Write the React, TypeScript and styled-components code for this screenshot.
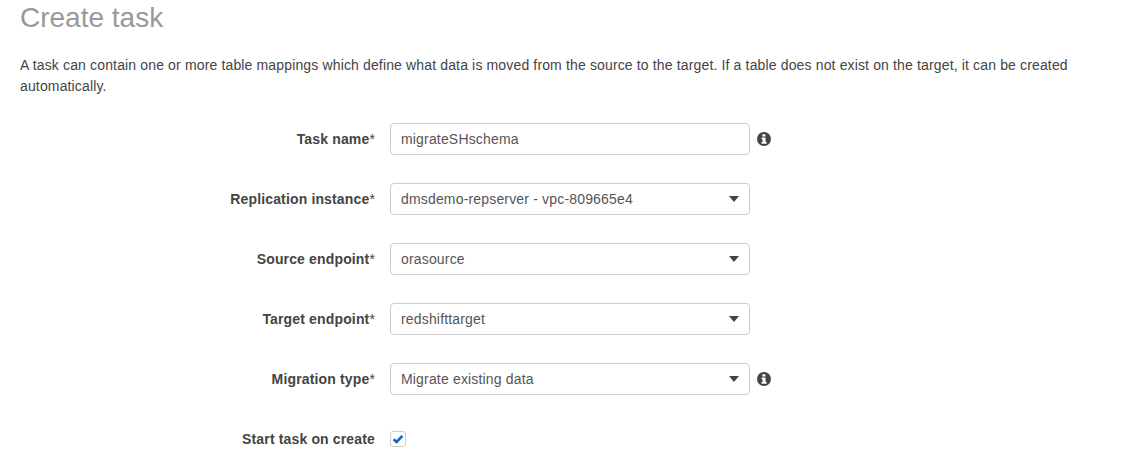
import { FC } from 'react';
import styled, { createGlobalStyle } from 'styled-components';

const GlobalStyle = createGlobalStyle`
    html, body {
        margin: 0;
        padding: 0;
        background: #fff;
    }
    body {
        font-family: "Liberation Sans", Arial, sans-serif;
        color: #444;
        overflow: hidden;
    }
`;

const Page = styled.div`
    width: 1132px;
    height: 464px;
    padding: 0 20px;
    box-sizing: border-box;
    overflow: hidden;
`;

const Title = styled.h1`
    margin: 0;
    height: 38px;
    font-size: 28px;
    line-height: 36px;
    font-weight: 400;
    color: #999;
`;

const Description = styled.p`
    margin: 17px 0 0;
    width: 1070px;
    font-size: 14px;
    line-height: 21px;
    letter-spacing: 0.146px;
    color: #444;
`;

const Form = styled.div`
    display: flex;
    flex-direction: column;
    margin-top: 26px;
    gap: 28px;
`;

const Row = styled.div`
    display: flex;
    align-items: center;
    height: 32px;
`;

const Label = styled.label`
    width: 370px;
    padding-right: 15px;
    box-sizing: border-box;
    text-align: right;
    font-size: 14px;
    font-weight: 700;
    letter-spacing: 0.15px;
    color: #444;
    white-space: nowrap;
`;

const Star = styled.span`
    font-weight: 400;
`;

const Field = styled.div`
    position: relative;
    display: flex;
    align-items: center;
    width: 360px;
    height: 32px;
    padding: 0 10px;
    box-sizing: border-box;
    border: 1px solid #ccc;
    border-radius: 4px;
    font-size: 14px;
    letter-spacing: 0.17px;
    color: #555;
    background: #fff;
`;

const Caret = styled.span`
    position: absolute;
    right: 10px;
    top: 12px;
    width: 0;
    height: 0;
    border-left: 5px solid transparent;
    border-right: 5px solid transparent;
    border-top: 6px solid #444;
`;

const InfoIcon = styled.svg`
    width: 14px;
    height: 14px;
    margin-left: 7px;
    fill: #444;
`;

const CheckBox = styled.div`
    display: flex;
    align-items: center;
    justify-content: center;
    width: 16px;
    height: 16px;
    box-sizing: border-box;
    border: 1px solid #ccc;
    border-radius: 3px;
    background: #fff;
`;

const Info: FC = () => (
    <InfoIcon viewBox="0 0 14 14">
        <path d="M7 0a7 7 0 1 0 0 14A7 7 0 0 0 7 0zM5.4 2.2h3v2.4h-3zM9.6 11.8H4.6V10h1V7.4h-1V5.6h4V10h1z" fillRule="evenodd" />
    </InfoIcon>
);

const fields = [
    { name: 'Task name', value: 'migrateSHschema', select: false, info: true },
    { name: 'Replication instance', value: 'dmsdemo-repserver - vpc-809665e4', select: true, info: false },
    { name: 'Source endpoint', value: 'orasource', select: true, info: false },
    { name: 'Target endpoint', value: 'redshifttarget', select: true, info: false },
    { name: 'Migration type', value: 'Migrate existing data', select: true, info: true },
];

const App: FC = () => (
    <Page>
        <GlobalStyle />
        <Title>Create task</Title>
        <Description>
            A task can contain one or more table mappings which define what data is moved from the source to the target. If a table does not exist on the target, it can be created automatically.
        </Description>
        <Form>
            {fields.map((f) => (
                <Row key={f.name}>
                    <Label>
                        {f.name}
                        <Star>*</Star>
                    </Label>
                    <Field>
                        {f.value}
                        {f.select && <Caret />}
                    </Field>
                    {f.info && <Info />}
                </Row>
            ))}
            <Row>
                <Label>Start task on create</Label>
                <CheckBox>
                    <svg width="12" height="12" viewBox="0 0 12 12">
                        <path d="M1.6 6.2 4.6 9 10.4 2.8" fill="none" stroke="#1166bb" strokeWidth="2.6" />
                    </svg>
                </CheckBox>
            </Row>
        </Form>
    </Page>
);

export default App;
